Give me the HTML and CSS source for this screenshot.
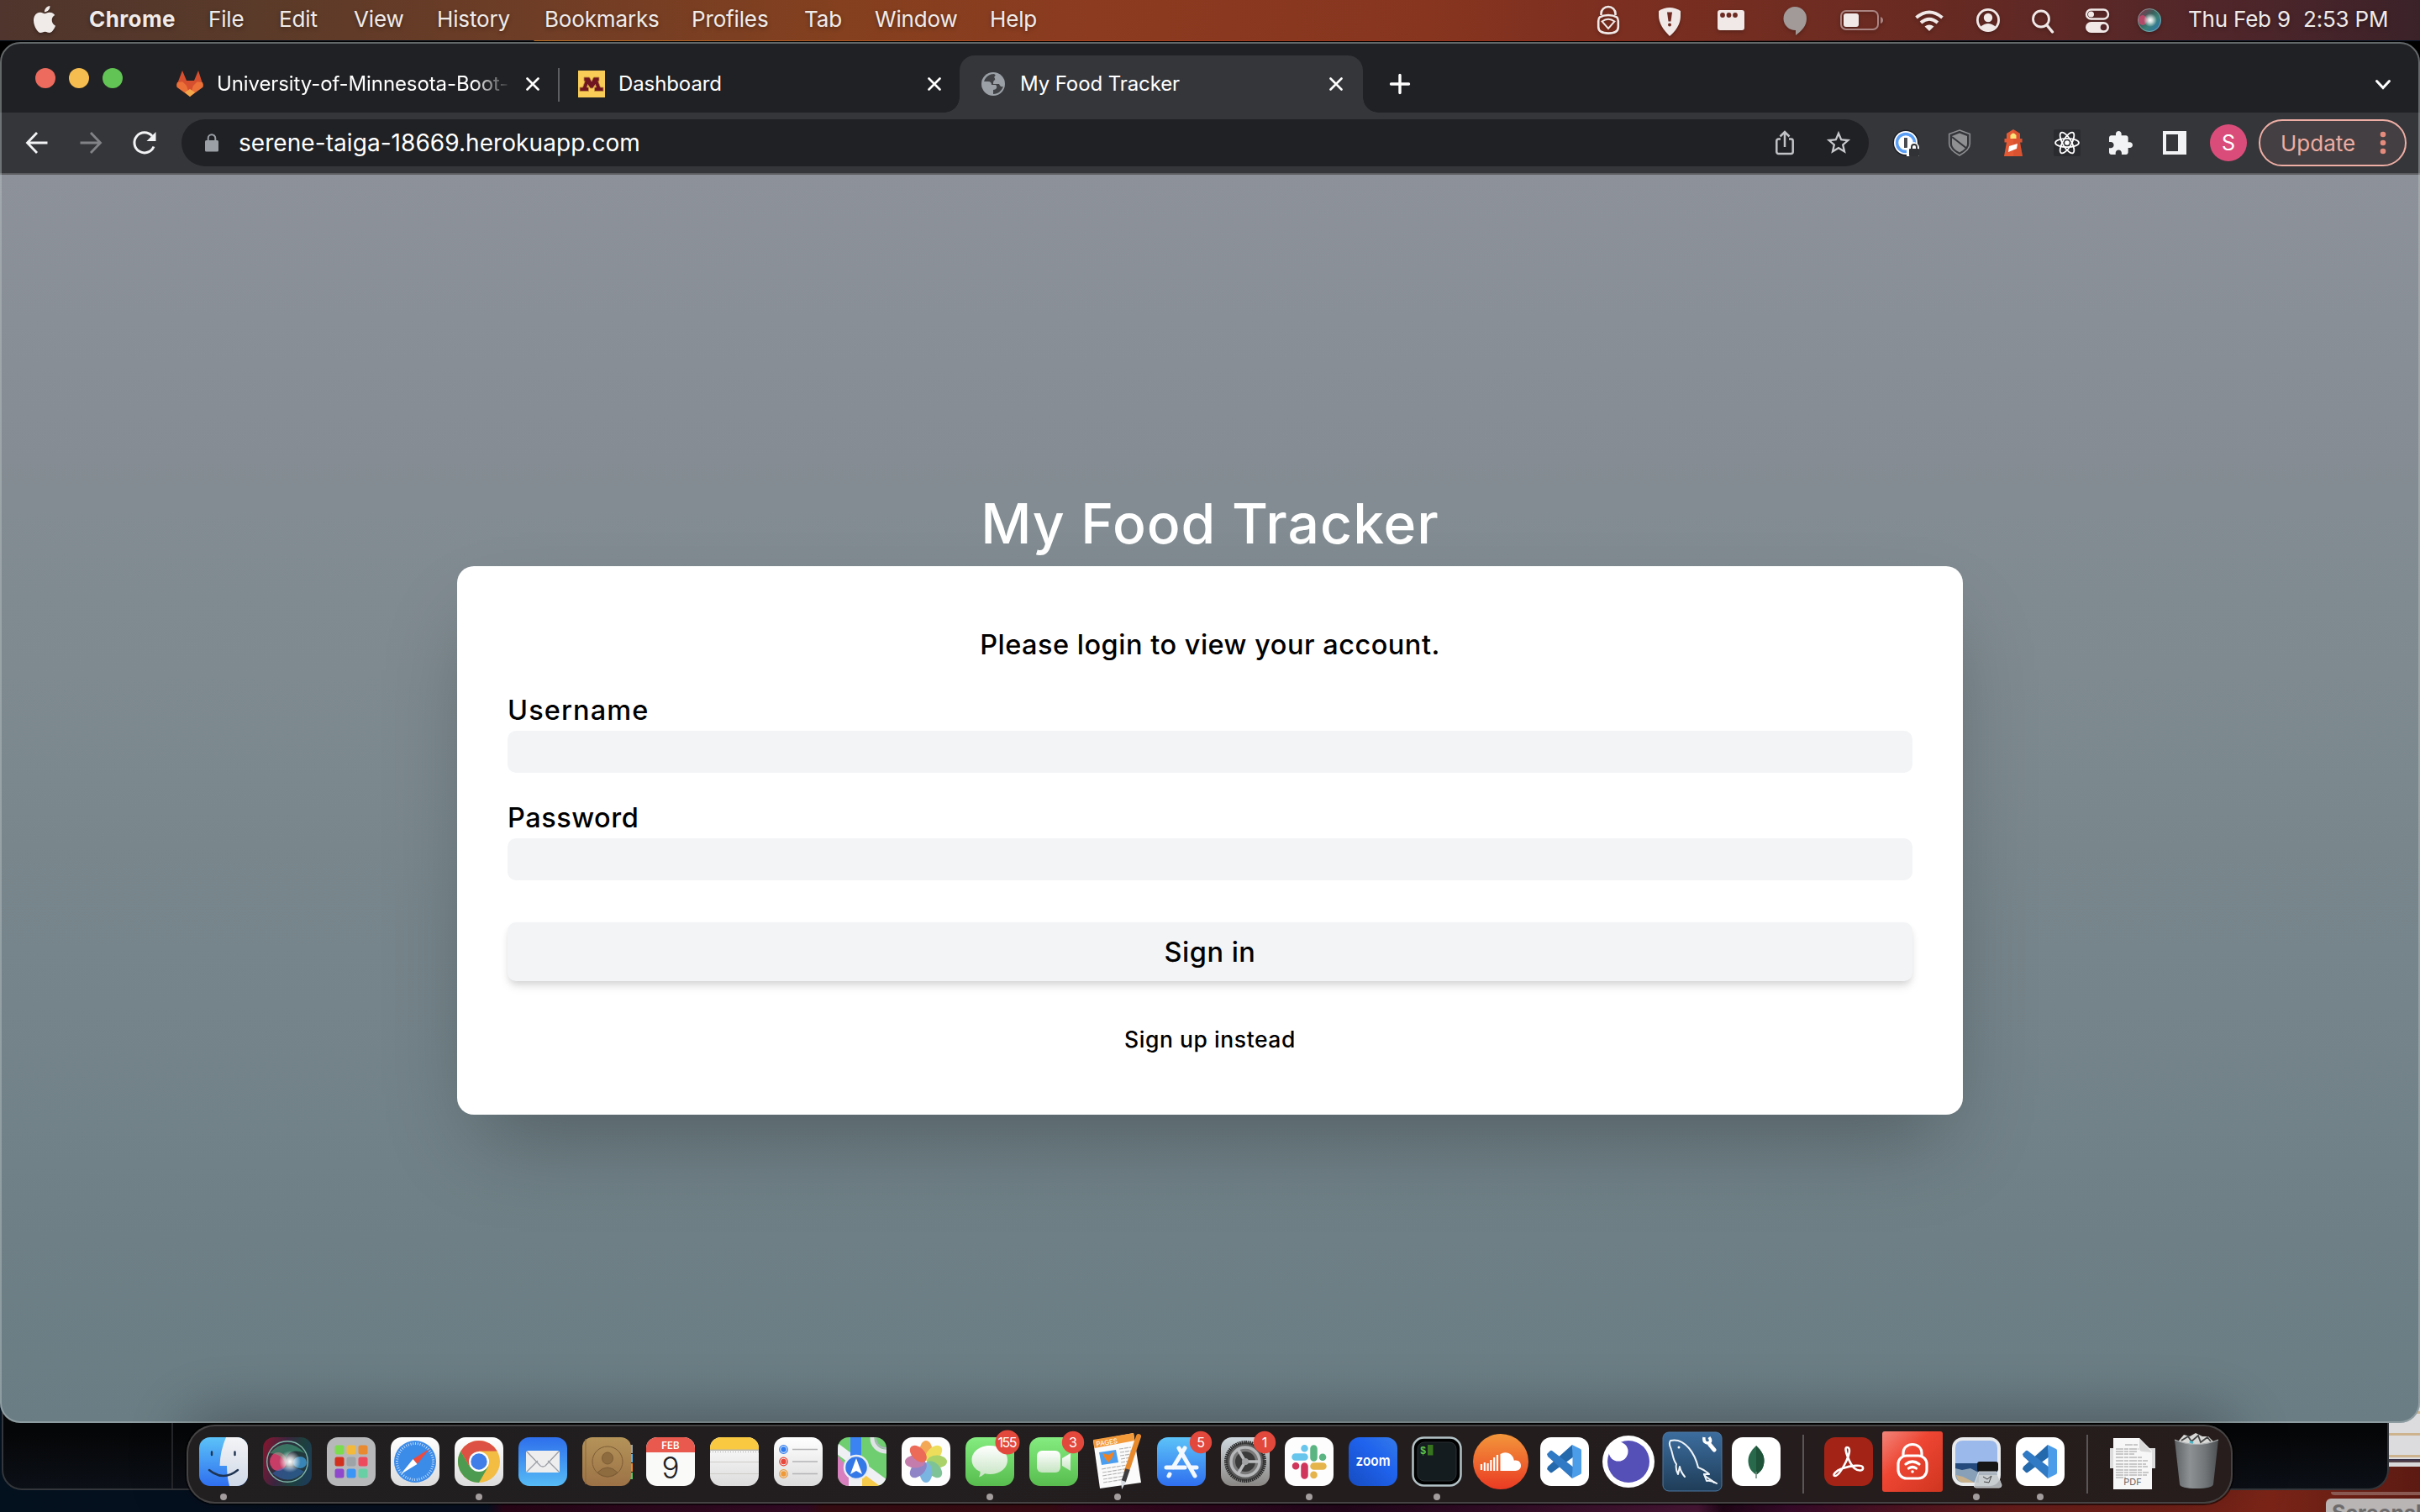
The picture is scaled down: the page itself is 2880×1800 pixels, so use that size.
FILE: index.html
```html
<!DOCTYPE html>
<html lang="en">
<head>
<meta charset="utf-8">
<title>My Food Tracker</title>
<link rel="stylesheet" href="styles.css">
</head>
<body>
<div class="desktop">
  <div class="back-paper"></div>
  <div class="back-window"></div>
  <div class="back-edge"></div>
  <div class="back-label">Screenshot</div>

  <header class="menubar">
    <svg class="apple" viewBox="0 0 24 24"><path fill="#f0ebe9" d="M12.152 6.896c-.948 0-2.415-1.078-3.96-1.04-2.04.027-3.91 1.183-4.961 3.014-2.117 3.675-.546 9.103 1.519 12.09 1.013 1.454 2.208 3.09 3.792 3.039 1.52-.065 2.09-.987 3.935-.987 1.831 0 2.35.987 3.96.948 1.637-.026 2.676-1.48 3.676-2.948 1.156-1.688 1.636-3.325 1.662-3.415-.039-.013-3.182-1.221-3.22-4.857-.026-3.04 2.48-4.494 2.597-4.559-1.429-2.09-3.623-2.324-4.39-2.376-2-.156-3.675 1.09-4.61 1.09zM15.53 3.83c.843-1.012 1.4-2.427 1.245-3.83-1.207.052-2.662.805-3.532 1.818-.78.896-1.454 2.338-1.273 3.714 1.338.104 2.715-.688 3.559-1.701"/></svg>
    <nav class="menus">
      <span class="app">Chrome</span><span>File</span><span>Edit</span><span>View</span><span>History</span><span>Bookmarks</span><span>Profiles</span><span>Tab</span><span>Window</span><span>Help</span>
    </nav>
    <div class="status">
      <svg width="40" height="40" viewBox="0 0 40 40" fill="none" stroke="#f0e9e8" stroke-width="2.6"><path d="M11.5 14v-2a8.5 8 0 0 1 17 0v2"/><path d="M20 14c4 0 7 .6 10 2.4 1.500 1 1.800 2.600 1.800 4.600v7c0 5-4 7.600-11.800 7.600S8.200 33 8.200 28v-7c0-2 .3-3.600 1.800-4.600C13 14.600 16 14 20 14z"/><path stroke-width="2" d="M12.500 21.500Q20 16 27.500 21.500L20 30z"/></svg>
      <svg width="40" height="40" viewBox="0 0 40 40"><path fill="#f0e9e8" d="M7 9Q20 1 33 9v6c0 10-6 18-13 24C13 32 7 24 7 14z"/><path fill="#6e2b22" d="M17 10.500h6l-1.500 11h-3z"/><circle cx="20" cy="25.500" r="2" fill="#6e2b22"/></svg>
      <svg width="40" height="40" viewBox="0 0 40 40"><rect x="4" y="8" width="32" height="24" rx="3" fill="#f0e9e8"/><g fill="#6c2b22"><circle cx="10" cy="14" r="2.900"/><circle cx="17.500" cy="14" r="2.900"/><circle cx="25" cy="14" r="2.900"/></g></svg>
      <svg width="40" height="40" viewBox="0 0 40 40"><path fill="#a19a98" d="M20 4a14 14 0 0 1 14 14c0 9-6 15-13 20v-6A14 14 0 1 1 20 4z"/></svg>
      <svg width="56" height="40" viewBox="0 0 56 40"><rect x="4" y="9" width="44" height="22" rx="6" fill="none" stroke="#aa8481" stroke-width="2"/><rect x="7" y="12" width="18" height="16" rx="3" fill="#f0e9e8"/><path fill="#aa8481" d="M51 16q3 1 3 4t-3 4z"/></svg>
      <svg width="40" height="40" viewBox="0 0 40 40" fill="none" stroke="#f0e9e8" stroke-width="4"><path d="M4.500 17q15.500-13 31 0"/><path d="M10 23q10-8.500 20 0"/><path fill="#f0e9e8" stroke="none" d="M14.500 27.500q5.500-4 11 0L20 33z"/></svg>
      <svg width="40" height="40" viewBox="0 0 40 40"><circle cx="20" cy="20" r="12.600" fill="none" stroke="#f0e9e8" stroke-width="2.800"/><circle cx="20" cy="17" r="5.200" fill="#f0e9e8"/><path fill="#f0e9e8" d="M11 28q9-8 18 0-9 8-18 0z"/></svg>
      <svg width="40" height="40" viewBox="0 0 40 40" fill="none" stroke="#f0e9e8" stroke-width="2.800" stroke-linecap="round"><circle cx="18" cy="18.500" r="9.500"/><path stroke-width="3.400" d="M25 26l6.500 8"/></svg>
      <svg width="40" height="40" viewBox="0 0 40 40"><rect x="7" y="7.500" width="26" height="11" rx="5.500" fill="none" stroke="#f0e9e8" stroke-width="2.400"/><circle cx="12.500" cy="13" r="3.500" fill="#f0e9e8"/><rect x="6" y="22" width="28" height="13" rx="6.500" fill="#f0e9e8"/><circle cx="27.500" cy="28.500" r="3.800" fill="#532629"/></svg>
      <svg width="40" height="40" viewBox="0 0 40 40"><circle cx="20" cy="20" r="14" fill="url(#siri)"/><circle cx="20" cy="20" r="13.500" fill="none" stroke="#8fb5ae" opacity=".7"/><ellipse cx="12" cy="20" rx="5" ry="6" fill="#e0456f" opacity=".7"/><circle cx="21" cy="20" r="8" fill="url(#glow)"/></svg>
      <span class="clock"><span>Thu Feb 9</span><span>2:53 PM</span></span>
    </div>
  </header>

  <main class="window">
    <div class="tabstrip">
      <div class="lights"><i class="red"></i><i class="amber"></i><i class="green"></i></div>
      <div class="tabs">
        <div class="tab">
          <svg width="32" height="32" viewBox="0 0 32 32"><path fill="#d6502f" d="M7 0l5 12h9l5-12 5.500 17L16 31 .5 17z"/><path fill="#ec7139" d="M1 14l9.500-1L16 31 .8 20Q-.6 18 1 14zM31 14l-9.500-1L16 31l15.200-11q1.400-2-.2-6z"/><path fill="#d6502f" d="M7 13h18l-9 9z"/><path fill="#f3a74b" d="M10 26l6-4 6 4-6 5z"/></svg>
          <span class="title fade">University-of-Minnesota-Boot-</span>
          <svg class="x" viewBox="0 0 16 16"><path d="M1.500 1.500l13 13m0-13l-13 13"/></svg>
        </div>
        <span class="sep"></span>
        <div class="tab second">
          <svg width="32" height="32" viewBox="0 0 32 32"><path fill="#f8cc57" d="M0 0h32v32H0z"/><path fill="#6f1420" stroke="#c28d3a" stroke-width=".8" d="M7 8h6.500l2.500 5 2.500-5H25v4.500h-1.200L26.500 20H30v4.500H19.500V20h2l-1-3.500L17.500 21h-3l-3-4.500-1 3.500h2v4.500H2V20h3.500l2.700-7.500H7z"/></svg>
          <span class="title">Dashboard</span>
          <svg class="x" viewBox="0 0 16 16"><path d="M1.500 1.500l13 13m0-13l-13 13"/></svg>
        </div>
        <div class="tab active">
          <svg width="32" height="32" viewBox="0 0 32 32"><circle cx="16" cy="16" r="14" fill="#9aa0a6"/><path fill="#35363a" d="M17 4c-5 0-10 3-12 9h5c3 0 4 2 4 4h5c3 3 0 6-3 6v5c6 0 10-4 12-9-3 1-4-1-5-3h-7c0-4 1-5 4-5 0-2-1-3 1-4 0-1-2-1-4-3z" opacity=".9"/><path fill="#9aa0a6" d="M19 5c4 1 8 5 9 9-2 3-6 2-7-1-4 0-2-4-4-5z"/></svg>
          <span class="title">My Food Tracker</span>
          <svg class="x" viewBox="0 0 16 16"><path d="M1.500 1.500l13 13m0-13l-13 13"/></svg>
        </div>
      </div>
      <svg class="plus" viewBox="0 0 28 28"><path d="M14 3.500v21M3.500 14h21"/></svg>
      <svg class="chev" viewBox="0 0 20 14"><path d="M2.500 2.500l7.500 8 7.500-8"/></svg>
    </div>

    <div class="toolbar">
      <div class="nav">
        <svg viewBox="0 0 32 32" fill="none" stroke="#f1f3f4" stroke-width="2.800"><path d="M28.500 16H5M16 4L4.500 16 16 28"/></svg>
        <svg viewBox="0 0 32 32" fill="none" stroke="#828387" stroke-width="2.800"><path d="M3.500 16H27M16 4l11.500 12L16 28"/></svg>
        <svg viewBox="0 0 32 32"><path d="M27 20.500A12 12 0 1 1 25 8" fill="none" stroke="#f1f3f4" stroke-width="3"/><path fill="#f1f3f4" d="M29.500 3v11h-11z"/></svg>
      </div>
      <div class="omnibox">
        <svg width="18" height="24" viewBox="0 0 18 24"><rect x="1" y="9" width="16" height="13.500" rx="1.500" fill="#9aa0a6"/><path d="M4.700 10V6.500a4.300 4.300 0 0 1 8.600 0V10" fill="none" stroke="#9aa0a6" stroke-width="2"/></svg>
        <span class="url">serene-taiga-18669.herokuapp.com</span>
        <svg width="32" height="32" viewBox="0 0 32 32" fill="none" stroke="#c0c2c5" stroke-width="2.500"><path d="M11 11.500H8.500a2.200 2.200 0 0 0-2.200 2.200v13a2.200 2.200 0 0 0 2.200 2.200h15a2.200 2.200 0 0 0 2.200-2.200v-13a2.200 2.200 0 0 0-2.200-2.200H21M16 21V4M10.500 8.500L16 3l5.500 5.500"/></svg>
        <svg width="34" height="34" viewBox="0 0 24 24"><path fill="#c7c9cc" d="M22 9.240l-7.190-.62L12 2 9.190 8.630 2 9.240l5.460 4.730L5.820 21 12 17.270 18.180 21l-1.630-7.030L22 9.240zM12 15.400l-3.760 2.270 1-4.280-3.320-2.880 4.380-.38L12 6.100l1.710 4.040 4.380.38-3.320 2.880 1 4.280L12 15.400z"/></svg>
      </div>
      <div class="ext">
        <svg viewBox="0 0 32 32"><circle cx="16" cy="16" r="15.500" fill="#1c1f24"/><circle cx="16" cy="16" r="14" fill="#fff"/><circle cx="16" cy="16" r="10.500" fill="none" stroke="#5a9ff5" stroke-width="3.500"/><path fill="#4a4d52" d="M14 10h4v12h-4z"/><path fill="#fff" d="M17 23q2-6 9-8 6 2 6 7v10H17z"/><rect x="20" y="23" width="12" height="9" rx="1" fill="#303235"/><path d="M23 24v-3a3 3 0 0 1 6 0v3" fill="none" stroke="#303235" stroke-width="2"/></svg>
        <svg viewBox="0 0 32 32"><path fill="none" stroke="#8c8d8f" stroke-width="1.600" d="M16 1l12.300 4.500V17c0 6-5 10-12.300 14C8.700 27 3.700 23 3.700 17V5.500z"/><path fill="#8f9092" d="M16 4.500l9 3.500v9c0 4-3.500 7.500-9 10.500-5.500-3-9-6.500-9-10.500V8z"/><path d="M7 9l18 14" stroke="#35363a" stroke-width="2"/></svg>
        <svg viewBox="0 0 32 32"><path fill="#e45a35" d="M16 0l8 5v6h2.500v4.500H24l3 16.500H5l3-16.500H5.500V11H8V5z"/><path fill="#c8482a" d="M16 0l8 5v6h2.500v4.500H24l3 16.500H16z" opacity=".35"/><path fill="#fbe57a" d="M12.500 11V7q3.500-5 7 0v4z"/><path fill="#fff" d="M11 20l10-3-1 6-10 4z"/></svg>
        <svg viewBox="0 0 32 32"><rect width="32" height="32" rx="2" fill="#2a2b2f"/><g fill="none" stroke="#fff" stroke-width="1.800"><ellipse cx="16" cy="16" rx="14" ry="5.200"/><ellipse cx="16" cy="16" rx="14" ry="5.200" transform="rotate(60 16 16)"/><ellipse cx="16" cy="16" rx="14" ry="5.200" transform="rotate(120 16 16)"/></g><circle cx="16" cy="16" r="2.800" fill="#fff"/></svg>
        <svg viewBox="0.500 -.500 24 24"><path fill="#f1f3f4" d="M20.500 11H19V7c0-1.100-.9-2-2-2h-4V3.500C13 2.120 11.880 1 10.500 1S8 2.120 8 3.500V5H4c-1.100 0-1.990.9-1.990 2v3.800H3.500c1.490 0 2.700 1.210 2.700 2.700s-1.210 2.700-2.700 2.700H2V20c0 1.100.9 2 2 2h3.800v-1.500c0-1.490 1.210-2.700 2.700-2.700 1.490 0 2.700 1.210 2.700 2.700V22H17c1.100 0 2-.9 2-2v-4h1.500c1.380 0 2.500-1.120 2.500-2.500S21.880 11 20.500 11z"/></svg>
        <svg viewBox="0 0 32 32"><path fill="#f1f3f4" fill-rule="evenodd" d="M2 2h28v28H2zM6 6h14v20H6z"/></svg>
      </div>
      <span class="avatar">S</span>
      <button class="update">Update<svg width="8" height="28" viewBox="0 0 8 28" fill="#e58b7d"><circle cx="4" cy="4" r="3.300"/><circle cx="4" cy="14" r="3.300"/><circle cx="4" cy="24" r="3.300"/></svg></button>
    </div>

    <section class="page">
      <h1>My Food Tracker</h1>
      <form class="card">
        <p class="lead">Please login to view your account.</p>
        <label class="user" for="username">Username</label>
        <input id="username" type="text">
        <label for="password">Password</label>
        <input id="password" type="password">
        <button type="button" class="signin">Sign in</button>
        <a class="signup">Sign up instead</a>
      </form>
    </section>
  </main>

  <footer class="dock">
    <svg viewBox="0 0 76 94"><defs>
      <clipPath id="tile"><rect x="9" y="15" width="58" height="58" rx="13"/></clipPath>
      <linearGradient id="blue" x2="0" y2="1"><stop stop-color="#5cc3f8"/><stop offset="1" stop-color="#2f6ff0"/></linearGradient>
      <linearGradient id="blueUp" x2="0" y2="1"><stop stop-color="#2e6fec"/><stop offset="1" stop-color="#56bbf5"/></linearGradient>
      <linearGradient id="white" x2="0" y2="1"><stop stop-color="#fff"/><stop offset="1" stop-color="#dcdcdc"/></linearGradient>
      <linearGradient id="face" x2="0" y2="1"><stop stop-color="#f4f4f6"/><stop offset="1" stop-color="#cfd9e8"/></linearGradient>
      <linearGradient id="greenG" x2="0" y2="1"><stop stop-color="#84ec80"/><stop offset="1" stop-color="#58bd4e"/></linearGradient>
      <linearGradient id="paper" x2="0" y2="1"><stop stop-color="#fff"/><stop offset="1" stop-color="#c6e4c2"/></linearGradient>
      <linearGradient id="brown" x2="0" y2="1"><stop stop-color="#b49359"/><stop offset="1" stop-color="#9c7246"/></linearGradient>
      <linearGradient id="steel" x2="0" y2="1"><stop stop-color="#cfd9df"/><stop offset="1" stop-color="#8a8784"/></linearGradient>
      <linearGradient id="sound" x2="0" y2="1"><stop stop-color="#f3963b"/><stop offset="1" stop-color="#ea3a23"/></linearGradient>
      <linearGradient id="sea" x2="0" y2="1"><stop stop-color="#3c6d9e"/><stop offset="1" stop-color="#1f3d58"/></linearGradient>
      <linearGradient id="zoomG" x1="1" y1="0" x2="0" y2="1"><stop stop-color="#357be8"/><stop offset=".4" stop-color="#1f63ee"/><stop offset="1" stop-color="#164cc0"/></linearGradient>
      <linearGradient id="redG" x2="1" y2="1"><stop stop-color="#f2857a"/><stop offset=".4" stop-color="#ee4633"/><stop offset="1" stop-color="#cf3520"/></linearGradient>
      <linearGradient id="bin"><stop stop-color="#5f6366"/><stop offset=".35" stop-color="#8d9194"/><stop offset=".7" stop-color="#717578"/><stop offset="1" stop-color="#4c4f52"/></linearGradient>
      <linearGradient id="siri" x2="1" y2="1"><stop stop-color="#a12b4a"/><stop offset=".4" stop-color="#3c5f5c"/><stop offset=".6" stop-color="#3a8078"/><stop offset="1" stop-color="#2870c0"/></linearGradient>
      <linearGradient id="siriBg" x1="0" y1=".3" x2="1" y2=".6"><stop stop-color="#7d1831"/><stop offset=".4" stop-color="#3a2540"/><stop offset=".7" stop-color="#1d403c"/><stop offset="1" stop-color="#1d3c56"/></linearGradient>
      <radialGradient id="glow"><stop stop-color="#fff"/><stop offset=".35" stop-color="#fff" stop-opacity=".75"/><stop offset="1" stop-color="#fff" stop-opacity="0"/></radialGradient>
      </defs>
      <g clip-path="url(#tile)"><path fill="url(#blue)" d="M9 15h58v58H9z"/><path fill="url(#face)" d="M41 15q-7 16-7.500 34H42q0 13 3 24h22V15z"/></g>
      <path fill="none" stroke="#1d3350" stroke-width="2.400" stroke-linecap="round" d="M24 32.500v3.500M51.500 32.500v3.500M21 54q17 14 34 0"/><circle class="dot" cx="38" cy="86" r="4"/></svg>
    <svg viewBox="0 0 76 94"><rect x="9" y="15" width="58" height="58" rx="13" fill="url(#siriBg)"/><circle cx="38" cy="44" r="24.500" fill="#26343c" opacity=".55"/><ellipse cx="27" cy="44" rx="10" ry="11" fill="#e0416f" opacity=".85"/><ellipse cx="53" cy="45" rx="8" ry="7" fill="#3f9ddd" opacity=".75"/><path fill="#48c890" opacity=".45" d="M17 34q20-22 42 0-20-8-24 10-6-10-18-10z"/><path fill="#3471c8" opacity=".5" d="M20 58q18-14 38-2-18 18-38 2z"/><circle cx="38" cy="44" r="24.300" fill="none" stroke="#7fb5a8" stroke-width="1.400"/><circle cx="41" cy="44" r="13" fill="url(#glow)"/></svg>
    <svg viewBox="0 0 76 94"><rect x="9" y="15" width="58" height="58" rx="13" fill="#b7b8ba"/><rect x="18.500" y="24.500" width="11" height="11" rx="2.500" fill="#7bdc4e"/><rect x="32.500" y="24.500" width="11" height="11" rx="2.500" fill="#f3b93b"/><rect x="46.500" y="24.500" width="11" height="11" rx="2.500" fill="#e98a30"/><rect x="18.500" y="38.500" width="11" height="11" rx="2.500" fill="#d2301f"/><rect x="32.500" y="38.500" width="11" height="11" rx="2.500" fill="#9da3a6"/><rect x="46.500" y="38.500" width="11" height="11" rx="2.500" fill="#ee4a5d"/><rect x="18.500" y="52.500" width="11" height="11" rx="2.500" fill="#8f47cc"/><rect x="32.500" y="52.500" width="11" height="11" rx="2.500" fill="#3a95f5"/><rect x="46.500" y="52.500" width="11" height="11" rx="2.500" fill="#68cfa4"/></svg>
    <svg viewBox="0 0 76 94"><rect x="9" y="15" width="58" height="58" rx="13" fill="url(#white)"/><circle cx="38" cy="44" r="25" fill="#3b8be8"/><circle cx="38" cy="44" r="21.500" fill="none" stroke="#d8eafc" stroke-width="3" stroke-dasharray=".8 2"/><path fill="#ec4b3e" d="M55 29L35.500 41l5 6z"/><path fill="#fff" d="M21 59l14.500-18 5 6z"/></svg>
    <svg viewBox="0 0 76 94"><rect x="9" y="15" width="58" height="58" rx="13" fill="url(#white)"/><circle cx="38" cy="44" r="25" fill="#f2bd42"/><path fill="#4d9b50" d="M16.300 31.500A25 25 0 0 0 38 69l11-19-22 0z"/><path fill="#dd5144" d="M16.300 31.500a25 25 0 0 1 43.400 0H38L27 50z"/><circle cx="38" cy="44" r="12" fill="#fff"/><circle cx="38" cy="44" r="9.700" fill="#3f7ee8"/><circle class="dot" cx="38" cy="86" r="4"/></svg>
    <svg viewBox="0 0 76 94"><rect x="9" y="15" width="58" height="58" rx="13" fill="url(#blueUp)"/><rect x="18" y="31" width="40" height="26" rx="2.500" fill="#eeeeef"/><path fill="none" stroke="#9b9fa4" stroke-width="1.300" d="M19 56l13-13M57 56L44 43M19 32l16 17q3 2 6 0l16-17"/></svg>
    <svg viewBox="0 0 76 94"><path fill="#9ba3a8" d="M66 24h3v10h-3z"/><path fill="#5fb6ee" d="M66 35h3v10h-3z"/><path fill="#ee8a2d" d="M66 46h3v10h-3z"/><path fill="#5cc668" d="M66 57h3v8h-3z"/><rect x="9" y="15" width="58" height="58" rx="12" fill="url(#brown)"/><g fill="#8f6c3f" stroke="#7d5d36"><circle cx="39" cy="44" r="18" fill="none"/><ellipse cx="39" cy="40" rx="6.500" ry="7"/><path d="M27 57q12-12 24 0-12 10-24 0z"/></g><path stroke="#8a683c" d="M13 17v54"/></svg>
    <svg viewBox="0 0 76 94"><g clip-path="url(#tile)"><path fill="#fafaf9" d="M9 15h58v58H9z"/><path fill="#e9594e" d="M9 15h58v18H9z"/></g><text x="38" y="28.500" font-size="11.500" font-weight="600" fill="#fff" text-anchor="middle">FEB</text><text x="38" y="64" font-size="35" font-weight="300" fill="#222" text-anchor="middle">9</text></svg>
    <svg viewBox="0 0 76 94"><g clip-path="url(#tile)"><path fill="url(#white)" d="M9 15h58v58H9z"/><path fill="#f9ca41" d="M9 15h58v15H9z"/><path fill="#b9b6ad" d="M9 29.500h58v1.500H9z"/></g><path stroke="#cfcdc9" d="M9 44.500h58M9 58.500h58"/><path stroke="#aaa" stroke-dasharray="1 2" d="M9 32.500h58"/></svg>
    <svg viewBox="0 0 76 94"><rect x="9" y="15" width="58" height="58" rx="13" fill="url(#white)"/><path stroke="#b4b4b6" stroke-width="1.300" d="M31 29.500h30M31 44h30M31 58.500h30"/><g fill="none" stroke-width="1.200"><circle cx="20.500" cy="29.500" r="4.800" stroke="#2f7cf0"/><circle cx="20.500" cy="44" r="4.800" stroke="#e8473b"/><circle cx="20.500" cy="58.500" r="4.800" stroke="#ee9a38"/></g><circle cx="20.500" cy="29.500" r="3.200" fill="#2f7cf0"/><circle cx="20.500" cy="44" r="3.200" fill="#e8473b"/><circle cx="20.500" cy="58.500" r="3.200" fill="#ee9a38"/></svg>
    <svg viewBox="0 0 76 94"><g clip-path="url(#tile)"><path fill="#6fce70" d="M9 15h58v58H9z"/><path fill="#d77fbf" d="M9 37l13 16v20H9z"/><path fill="#f6cb4b" d="M38 73V56l24 17z"/><path stroke="#eef0f4" stroke-width="11" d="M5 26l70 52" fill="none"/><path fill="#eef0f4" d="M22 50h16v23H22z"/><circle cx="66" cy="16" r="16" fill="none" stroke="#dfe3e6" stroke-width="5"/><circle cx="66" cy="16" r="12" fill="none" stroke="#aeb6bd" stroke-width="2"/><path fill="#3b83f3" d="M24 15h13v31H24z"/></g><circle cx="31" cy="51" r="14" fill="#3478e8" stroke="#e9edf2" stroke-width="2.500"/><path fill="#fff" d="M31 40l7 19-7-4-7 4z"/></svg>
    <svg viewBox="0 0 76 94"><rect x="9" y="15" width="58" height="58" rx="13" fill="#fdfdfd"/><g opacity=".85"><ellipse cx="38" cy="31" rx="7.500" ry="12" fill="#f19a38"/><ellipse cx="38" cy="31" rx="7.500" ry="12" fill="#ecd83f" transform="rotate(45 38 44)"/><ellipse cx="38" cy="31" rx="7.500" ry="12" fill="#9ccb50" transform="rotate(90 38 44)"/><ellipse cx="38" cy="31" rx="7.500" ry="12" fill="#69b985" transform="rotate(135 38 44)"/><ellipse cx="38" cy="31" rx="7.500" ry="12" fill="#64a9de" transform="rotate(180 38 44)"/><ellipse cx="38" cy="31" rx="7.500" ry="12" fill="#7b70bd" transform="rotate(225 38 44)"/><ellipse cx="38" cy="31" rx="7.500" ry="12" fill="#bb66a0" transform="rotate(270 38 44)"/><ellipse cx="38" cy="31" rx="7.500" ry="12" fill="#e8513c" transform="rotate(315 38 44)"/></g></svg>
    <svg viewBox="0 0 76 94"><rect x="9" y="15" width="58" height="58" rx="13" fill="url(#greenG)"/><path fill="url(#paper)" d="M38 25c12 0 21 7 21 17s-9 17-21 17q-3 0-6-.7-3 3-7 4.200 2-3 1.500-6.500C20 53 16.500 48 16.500 42 16.500 32 26 25 38 25z"/><circle class="badge" cx="59" cy="21" r="14.500"/><text class="num" x="59" y="26.500" textLength="23">155</text><circle class="dot" cx="38" cy="86" r="4"/></svg>
    <svg viewBox="0 0 76 94"><rect x="9" y="15" width="58" height="58" rx="13" fill="url(#greenG)"/><rect x="18" y="31" width="28" height="26" rx="6" fill="url(#paper)"/><path fill="url(#paper)" d="M48 40l10-6v21l-10-6z"/><circle class="badge" cx="61" cy="21" r="13.200"/><text class="num" x="61" y="26.500">3</text></svg>
    <svg viewBox="0 0 76 94"><path fill="#fbfbfb" d="M9 19l48-9 9 59-49 7z"/><path fill="#f39a3b" d="M9 18l48-8 1.500 9L10.500 28z"/><text x="13" y="26" font-size="8" fill="#fff" transform="rotate(-9 13 26)">PAGES</text><path fill="#4c9ff0" d="M16 33l20-3 3 15-20 3z"/><path fill="#ef8324" d="M20 34l7 2 7-4-2 7-5 6-4-5z"/><path stroke="#b5b5b5" stroke-width="1.200" stroke-dasharray="5 1" d="M40 29l14-2M41 33l14-2M41 37l14-2M42 41l12-2M42 45l11-2M19 53l36-6M20 57l32-5M20 61l30-5M21 65l26-4M21 69l25-4"/><path stroke="#e88a2c" stroke-width="6" stroke-linecap="round" d="M63 14L49 55"/><path stroke="#3e3e40" stroke-width="5.500" d="M50 53l-5 15"/><path fill="#d5dbe0" d="M42 66l6 2-5 9z"/><circle class="dot" cx="38" cy="86" r="4"/></svg>
    <svg viewBox="0 0 76 94"><rect x="9" y="15" width="58" height="58" rx="13" fill="url(#blue)"/><g fill="none" stroke="#f4f8ff" stroke-width="5" stroke-linecap="round"><path d="M35 28l19 33M42 28L28 51M24 59l-1 2M20 51h22M50 51h6"/></g><circle class="badge" cx="61" cy="21" r="13.200"/><text class="num" x="61" y="26.500">5</text></svg>
    <svg viewBox="0 0 76 94"><rect x="9" y="15" width="58" height="58" rx="13" fill="url(#steel)"/><circle cx="38" cy="44" r="23" fill="#5a5a5a" stroke="#2b2b2b" stroke-width="4" stroke-dasharray="1.600 .8"/><circle cx="38" cy="44" r="17" fill="#797979" stroke="#b5b7b9" stroke-width="3.500"/><circle cx="38" cy="44" r="12" fill="#3b3b3b"/><path stroke="#b9bbbd" stroke-width="3.500" d="M38 44h17M38 44l-9-15M38 44l-9 15"/><circle cx="38" cy="44" r="4" fill="#a2a4a6"/><circle class="badge" cx="61" cy="21" r="13.200"/><text class="num" x="61" y="26.500">1</text></svg>
    <svg viewBox="0 0 76 94"><rect x="9" y="15" width="58" height="58" rx="13" fill="#fdfdfd"/><g stroke-width="8.500" stroke-linecap="round"><path stroke="#68c5ec" d="M21.500 38.500h11M32.500 28.200v.1"/><path stroke="#5bb583" d="M43.500 28.500v11M54 38.700h.1"/><path stroke="#e5b44b" d="M43.500 49.500h11M43.500 59.800v.1"/><path stroke="#d0365c" d="M32.500 49.500v11M22 49.300h.1"/></g><circle class="dot" cx="38" cy="86" r="4"/></svg>
    <svg viewBox="0 0 76 94"><rect x="9" y="15" width="58" height="58" rx="13" fill="url(#zoomG)"/><text x="38" y="49" font-size="18" font-weight="600" fill="#fff" text-anchor="middle" textLength="41" lengthAdjust="spacingAndGlyphs">zoom</text></svg>
    <svg viewBox="0 0 76 94"><rect x="9.500" y="15.500" width="57" height="57" rx="13" fill="#000" stroke="#b3c2c6" stroke-width="2.500"/><rect x="15" y="21" width="46" height="46" rx="8" fill="#141c1f" stroke="#2a3134"/><text x="18" y="35" font-size="12" font-family="Liberation Mono, monospace" font-weight="700" fill="#5fc94b">$</text><path fill="#37761f" d="M27 24h6.500v12.500H27z"/><circle class="dot" cx="38" cy="86" r="4"/></svg>
    <svg viewBox="0 0 76 94"><circle cx="38" cy="44" r="33" fill="url(#sound)"/><path stroke="#fff" stroke-width="2.200" d="M15 47v7M18.800 45v10M22.600 46v9M26.400 42v13M30.200 39v16M34 36v19"/><path fill="#fff" d="M37.500 35q4-2.500 8-1.500c5 1.200 8 5 8.300 9.300 5-1.300 8.200 2 8.200 6s-3 6.200-6.500 6.200h-18z"/></svg>
    <svg viewBox="0 0 76 94"><rect x="9" y="15" width="58" height="58" rx="13" fill="#fff"/><g id="vs"><path fill="#2569ad" d="M47 24l2 14-26 19q-1 .5-2 0l-4-4 1-3z"/><path fill="#3079c4" d="M17 35l4-4q1-.5 2 0l26 20-2 13-29-26z"/><path fill="#4b9ce9" d="M47 24l10 5q1 .5 1 2v26q0 1.500-1 2l-10 5 .5-13V37z"/></g></svg>
    <svg viewBox="0 0 76 94"><circle cx="38" cy="44" r="31" fill="#fff"/><circle cx="38" cy="44" r="25" fill="#554fb8"/><circle cx="26" cy="32" r="11.500" fill="#fff"/></svg>
    <svg viewBox="0 0 76 94"><rect x="3" y="9" width="70" height="70" rx="7" fill="url(#sea)" stroke="#4d7ba5"/><g fill="none" stroke="#eef4f9" stroke-width="2" stroke-linecap="round" stroke-linejoin="round"><path d="M29 62q-5-6-6-12l-2 9c-2-4-3-8-2-12-4-5-4-11-6-17-1-4-4-7-1-11 8-2 16 2 22 9 6 7 9 15 11 23 6 2 9 4 13 8l-6 0c1 4 7 5 12 10"/><path d="M52 59l3 8q5-1 12 3"/></g><circle cx="22" cy="27" r="1.500" fill="#fff"/><path fill="none" stroke="#fff" stroke-width="5" stroke-linecap="round" d="M59 24l5 6"/><path fill="none" stroke="#fff" stroke-width="3.500" d="M52 15q-1 6 4 7 6-1 2-7"/></svg>
    <svg viewBox="0 0 76 94"><rect x="9" y="15" width="58" height="58" rx="13" fill="#fff"/><path fill="#27694a" d="M38 25c6 6 9.500 11 9.500 18 0 8-4 13-8.500 16h-2c-4.500-3-8.500-8-8.500-16 0-7 3.500-12 9.500-18z"/><path fill="#1e5339" d="M38 25c6 6 9.500 11 9.500 18 0 8-4 13-8.500 16h-1z"/><path stroke="#6d8a7a" stroke-width="1.500" d="M38 56v8"/></svg>
    <span class="rule"></span>
    <svg viewBox="0 0 76 94"><rect x="9" y="15" width="58" height="58" rx="13" fill="#a32316"/><path fill="none" stroke="#fff" stroke-width="2.600" stroke-linejoin="round" d="M36 27c5 0 3 9-1 17s-9 17-13 17 0-6 9-9 23-5 24-1-5 5-10 1-14-25-9-25z"/></svg>
    <svg viewBox="0 0 76 94"><rect x="2" y="8" width="72" height="72" rx="3" fill="url(#redG)"/><g fill="none" stroke="#fff" stroke-width="3.200"><path d="M27 38v-4c0-14 22-14 22 0v4"/><rect x="21" y="37" width="34" height="27" rx="10"/><path stroke-linecap="round" d="M30 47q8-6 16 0M33.500 52q4.500-3 9 0"/></g><circle cx="38" cy="56" r="1.800" fill="#fff"/></svg>
    <svg viewBox="0 0 76 94"><rect x="9" y="15" width="58" height="58" rx="13" fill="#e9eaec"/><path fill="#9cb9ec" d="M13 46V28q0-9 9-9h32q9 0 9 9v18z"/><path fill="#24497d" d="M13 46h50v14H13z"/><path fill="#88a0b8" d="M13 52l8 2 10-2 10 5v12H24q-11 0-11-10z"/><path fill="#c9b18c" d="M14 60l8 2 14 7H24q-9 0-10-9z"/><rect x="39" y="44" width="25" height="12" rx="3" fill="#161616"/><path fill="#c3c8cc" stroke="#e7eaec" d="M41 56h21l6 16q0 3-3 3H38q-3 0-3-3z" opacity=".85"/><path stroke="#444" d="M46 62l5 3 5-4-3 8-6-1" fill="none"/><circle class="dot" cx="38" cy="86" r="4"/></svg>
    <svg viewBox="0 0 76 94"><rect x="9" y="15" width="58" height="58" rx="13" fill="#fff"/><use href="#vs"/><circle class="dot" cx="38" cy="86" r="4"/></svg>
    <span class="rule"></span>
    <svg viewBox="0 0 76 94"><rect x="11" y="28" width="54" height="24" fill="#dcdcdc"/><path fill="#f7f7f7" d="M15 16h31l15 15v46H15z"/><path fill="#d9d9d9" d="M46 16v12q0 4 4 4l11 1z"/><path stroke="#9b9b9b" stroke-width="1" stroke-dasharray="9 1 5 1" d="M29 24h15M18 29h27M18 32h26M18 35h22M18 39h32M18 43h38M18 47h36M18 50h38M18 54h32M18 57h39M18 60h37M18 63h12"/><text x="38" y="72" font-size="11" fill="#6a6a6a" text-anchor="middle">PDF</text></svg>
    <svg viewBox="0 0 76 94"><path fill="#d8d8d6" d="M17 19l6-7 7 2 7-4 8 4 7 0 6 6-2 4H18z"/><path stroke="#444" stroke-width="1.800" fill="none" d="M20 19l8-5 4 6 8-7 3 8 8-6 4 5"/><path stroke="#4bb7c8" stroke-width="3" d="M30 20l4 2"/><path fill="url(#bin)" d="M12 18q26 11 52 0l-6 53q-1 5-20 5t-20-5z"/><path fill="none" stroke="#a9acae" stroke-width="1.200" d="M12 18q26 11 52 0"/></svg>
  </footer>
</div>
</body>
</html>
```
FILE: styles.css
```css
* { box-sizing: border-box; }
html, body { margin: 0; width: 2880px; height: 1800px; overflow: hidden; }
body { font-family: Inter, "Liberation Sans", sans-serif; }
svg { display: block; flex: none; }

.desktop {
  position: relative; width: 2880px; height: 1800px; overflow: hidden;
  display: flex; flex-direction: column;
  background: linear-gradient(90deg, #03101d 0, #071021 580px, #2a0518 600px, #350b26 960px, #3a0d12 980px, #3b0c14 1250px, #3a0820 1280px, #24061c 1600px, #4a1737 2020px, #220618 2050px, #3a0b2c 2130px, #6d1f1b 2400px, #7a2417 2700px, #5c1a12 2880px);
}

/* Windows and files that show behind the browser */
.back-window {
  position: absolute; left: 2px; top: 1600px; width: 2841px; height: 174px;
  background: linear-gradient(90deg, transparent 202px, #25272b 202px, #25272b 204px, transparent 204px), linear-gradient(#050607 60%, #0c1017);
  background-origin: border-box;
  border: 2px solid #33363a; border-radius: 0 0 24px 24px;
}
.back-paper {
  position: absolute; left: 2830px; top: 1640px; width: 50px; height: 106px;
  background: linear-gradient(transparent 97px, #32304a 97px, #604848 101px, #d8d8da 101px), repeating-linear-gradient(#dcdcdf 0 14px, #cdb48e 14px 17px, #dcdcdf 17px 26px);
}
.back-edge { position: absolute; left: 2774px; top: 1776px; width: 120px; height: 4px; background: #8a5a52; border-radius: 0 0 0 4px; }
.back-label {
  position: absolute; left: 2768px; top: 1784px; width: 160px; height: 30px; padding-left: 7px;
  background: #b9b5b4; border-radius: 6px; color: #6d6b6b; font: 700 25px/34px Inter, sans-serif;
}

.menubar {
  height: 48px; flex: none; display: flex; align-items: center; position: relative;
  background: linear-gradient(90deg, #4f352d 0, #5a3a29 300px, #6f3d26 640px, #84401f 1000px, #8c3b20 1300px, #87351f 1700px, #7f3020 1860px, #682a22 2300px, #50262a 2640px, #3b2229 2880px);
  color: #f0ebe9; font-size: 26px; line-height: 48px; text-shadow: 0 2px 5px rgba(0,0,0,.35);
}
.apple { width: 32px; height: 32px; margin: -3px 0 0 37px; filter: drop-shadow(0 2px 2px rgba(0,0,0,.3)); }
.menus { display: grid; grid-template-columns: 142px 84px 89px 99px 128px 175px 134px 84px 137px 60px; margin: -2px 0 0 37px; letter-spacing: -.15px; }
.app { font-weight: 700; letter-spacing: .4px; }
.status { margin-left: 656px; display: grid; grid-template-columns: 73px 73px 76px 71px 89px 70px 65px 65px 62px 66px auto; align-items: center; }
.status svg { filter: drop-shadow(0 2px 2px rgba(0,0,0,.25)); }
.clock { display: grid; grid-template-columns: 137px 110px; margin-top: -2px; letter-spacing: -.2px; white-space: nowrap; }

.window {
  position: relative; z-index: 1; height: 1646px; padding-top: 2px; flex: none; display: flex; flex-direction: column;
  background: linear-gradient(90deg, #04121f 635px, #b5702a 636px, #a3411f 1300px, #8a2d1c 1900px, #071627 2340px) 0 0/100% 1px no-repeat, linear-gradient(#000, #000) 0 0/100% 30px no-repeat;
  border-radius: 0 0 24px 24px;
}
.window::after {
  content: ""; position: absolute; inset: 2px 0 0; border: 2px solid rgba(190,200,200,.42);
  border-radius: 24px; pointer-events: none;
}
.tabstrip {
  height: 84px; flex: none; display: flex; background: #202124; border-radius: 24px 24px 0 0; padding-top: 16px;
}
.lights { display: flex; gap: 16px; padding: 15px 40px 0 42px; }
.lights i { width: 24px; height: 24px; border-radius: 50%; }
.red { background: #ed6a5e; }
.amber { background: #f5bd4f; }
.green { background: #61c454; }
.tabs { display: flex; align-items: center; height: 68px; }
.tab { display: flex; align-items: center; width: 478px; height: 68px; padding: 0 22px 0 24px; }
.tab.second { width: 476px; padding-left: 22px; }
.tab.active { width: 480px; padding: 0 24px; background: #35363a; border-radius: 18px 18px 0 0; position: relative; }
.tab.active::before, .tab.active::after { content: ""; position: absolute; bottom: 0; width: 18px; height: 18px; }
.tab.active::before { left: -18px; background: radial-gradient(circle at 0 0, transparent 17.500px, #35363a 18px); }
.tab.active::after { right: -18px; background: radial-gradient(circle at 100% 0, transparent 17.500px, #35363a 18px); }
.title { flex: 1; min-width: 0; margin: 0 19px 0 16px; color: #fff; font-size: 24px; letter-spacing: -.1px; line-height: 34px; white-space: nowrap; overflow: hidden; }
.fade { -webkit-mask-image: linear-gradient(90deg, #000 305px, transparent 350px); mask-image: linear-gradient(90deg, #000 305px, transparent 350px); }
.sep { width: 2px; height: 40px; background: #5d5e62; margin-top: 2px; }
.x { width: 16px; height: 16px; fill: none; stroke: #fff; stroke-width: 2.600; stroke-linecap: round; }
.plus { width: 28px; height: 28px; margin: 20px 0 0 30px; fill: none; stroke: #fff; stroke-width: 3.400; stroke-linecap: round; }
.chev { width: 20px; height: 14px; margin: 28px 34px 0 auto; fill: none; stroke: #fff; stroke-width: 3; stroke-linecap: round; }

.toolbar { height: 74px; flex: none; display: flex; align-items: center; padding-left: 28px; background: #35363a; border-bottom: 2px solid #5b5c5f; }
.nav, .ext { display: flex; gap: 32px; }
.nav svg, .ext svg { width: 32px; height: 32px; }
.omnibox { width: 2008px; height: 56px; margin: 0 28px; padding: 0 19px 0 27px; display: flex; align-items: center; border-radius: 28px; background: #202124; }
.url { flex: 1; margin-left: 23px; color: #fff; font-size: 28px; letter-spacing: .06px; }
.omnibox svg + svg { margin-left: 31px; }
.avatar { width: 44px; height: 44px; margin: 0 14px 0 26px; border-radius: 50%; background: #da4d7a; color: #fff; font-size: 25px; line-height: 44px; text-align: center; }
.update { width: 176px; height: 56px; display: flex; align-items: center; justify-content: space-between; padding: 0 22px 0 24px; border: 2px solid #eeaea5; border-radius: 28px; background: #443f42; color: #eeaca2; font: 400 26px Inter, sans-serif; }

.page {
  flex: 1; display: flex; flex-direction: column; align-items: center; border-radius: 0 0 24px 24px;
  background: linear-gradient(#8d929a 0, #858c93 23%, #828c92 27%, #7e8a90 40%, #76858b 62%, #6e8086 85%, #6a7d84 100%);
  color: #000;
}
h1 { margin: 372px 0 0; height: 94px; color: #fff; font-size: 66px; font-weight: 500; line-height: 87px; letter-spacing: 1px; }
.card {
  width: 1792px; height: 653px; padding: 64px 60px 0; display: flex; flex-direction: column;
  background: #fff; border-radius: 20px; box-shadow: 0 50px 100px -24px rgba(0,0,0,.27);
  font-size: 32.500px; font-weight: 500; letter-spacing: .5px;
}
.lead { margin: 0 0 30px; line-height: 60px; text-align: center; }
.card label { line-height: 36px; padding-bottom: 6px; }
.card .user { letter-spacing: 1.100px; }
.card input { height: 50px; margin: 0 0 36px; border: 0; border-radius: 10px; background: #f3f4f6; }
.signin { height: 70px; margin-top: 14px; border: 0; border-radius: 10px; background: #f3f4f6; color: #000; font: 500 32.500px Inter, sans-serif; letter-spacing: .5px; box-shadow: 0 8px 12px -2px rgba(0,0,0,.1), 0 4px 8px -2px rgba(0,0,0,.1); }
.signup { margin-top: 49px; font-size: 26.500px; line-height: 40px; letter-spacing: .55px; text-align: center; }

.dock {
  position: relative; z-index: 2; width: 2435px; height: 94px; margin: 2px 0 0 222px; padding-left: 6px; flex: none;
  display: flex; background: linear-gradient(90deg, #211f20, #231d1e 50%, #261d1c); border-radius: 34px;
  box-shadow: inset 0 0 0 2px #454343, 0 0 0 2px rgba(0,0,0,.55), 0 -10px 70px rgba(0,0,0,.3);
}
.dock svg { width: 76px; height: 94px; font-family: Inter, sans-serif; }
.dot { fill: #a39d9e; }
.badge { fill: #e2483b; }
.num { fill: #fff; font-size: 16px; text-anchor: middle; }
.rule { flex: none; width: 2px; height: 70px; margin: 12px 15px 0 17px; background: #5a5556; }
```
